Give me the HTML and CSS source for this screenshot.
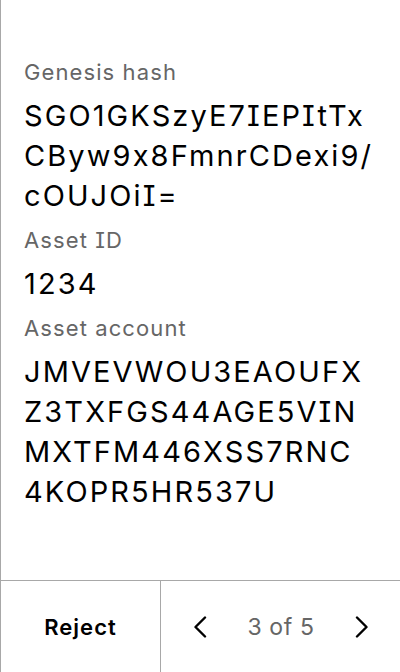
FILE: index.html
```html
<!DOCTYPE html>
<html>
<head>
<meta charset="utf-8">
<link rel="stylesheet" href="styles.css">
</head>
<body>
<div class="screen">
  <main class="content">
    <div class="field">
      <div class="label">Genesis hash</div>
      <div class="value">SGO1GKSzyE7IEPItTx<br>CByw9x8FmnrCDexi9/<br>cOUJOiI=</div>
    </div>
    <div class="field">
      <div class="label">Asset ID</div>
      <div class="value">1234</div>
    </div>
    <div class="field">
      <div class="label">Asset account</div>
      <div class="value">JMVEVWOU3EAOUFX<br>Z3TXFGS44AGE5VIN<br>MXTFM446XSS7RNC<br>4KOPR5HR537U</div>
    </div>
  </main>
  <footer class="footer">
    <button class="reject">Reject</button>
    <div class="pager">
      <svg class="chev" width="16" height="22" viewBox="0 0 16 22"><path d="M13 1.5 L3.5 11 L13 20.5" fill="none" stroke="#000" stroke-width="2.4" stroke-linecap="round" stroke-linejoin="round"/></svg>
      <span class="count">3 of 5</span>
      <svg class="chev" width="16" height="22" viewBox="0 0 16 22"><path d="M3 1.5 L12.5 11 L3 20.5" fill="none" stroke="#000" stroke-width="2.4" stroke-linecap="round" stroke-linejoin="round"/></svg>
    </div>
  </footer>
</div>
</body>
</html>
```
FILE: styles.css
```css
* { box-sizing: border-box; }
html, body { margin: 0; padding: 0; background: #fff; }
body { font-family: Inter, "Noto Sans", sans-serif; color: #000; font-feature-settings: "cv08" 1; }
.screen {
  width: 400px;
  height: 672px;
  border-left: 1px solid #a8a8a8;
  display: flex;
  flex-direction: column;
}
.content {
  flex: 1;
  padding: 57px 0 0 23px;
  display: flex;
  flex-direction: column;
  gap: 9px;
}
.field { display: flex; flex-direction: column; gap: 9px; }
.label {
  font-size: 22px;
  line-height: 30px;
  letter-spacing: 1.1px;
  color: #666;
}
.value {
  font-size: 29px;
  line-height: 40px;
  letter-spacing: 2.1px;
  white-space: nowrap;
  color: #000;
}
.footer {
  height: 92px;
  border-top: 1px solid #a8a8a8;
  display: flex;
}
.reject {
  width: 160px;
  border: 0;
  border-right: 1px solid #a8a8a8;
  background: transparent;
  font-family: inherit;
  font-size: 22px;
  font-weight: 600;
  letter-spacing: 1px;
  color: #000;
  padding: 0;
}
.pager {
  flex: 1;
  display: flex;
  align-items: center;
  justify-content: space-between;
  padding: 0 30px 0 31px;
}
.count {
  font-size: 23px;
  letter-spacing: 0.6px;
  color: #666;
}
.chev { display: block; }
```
